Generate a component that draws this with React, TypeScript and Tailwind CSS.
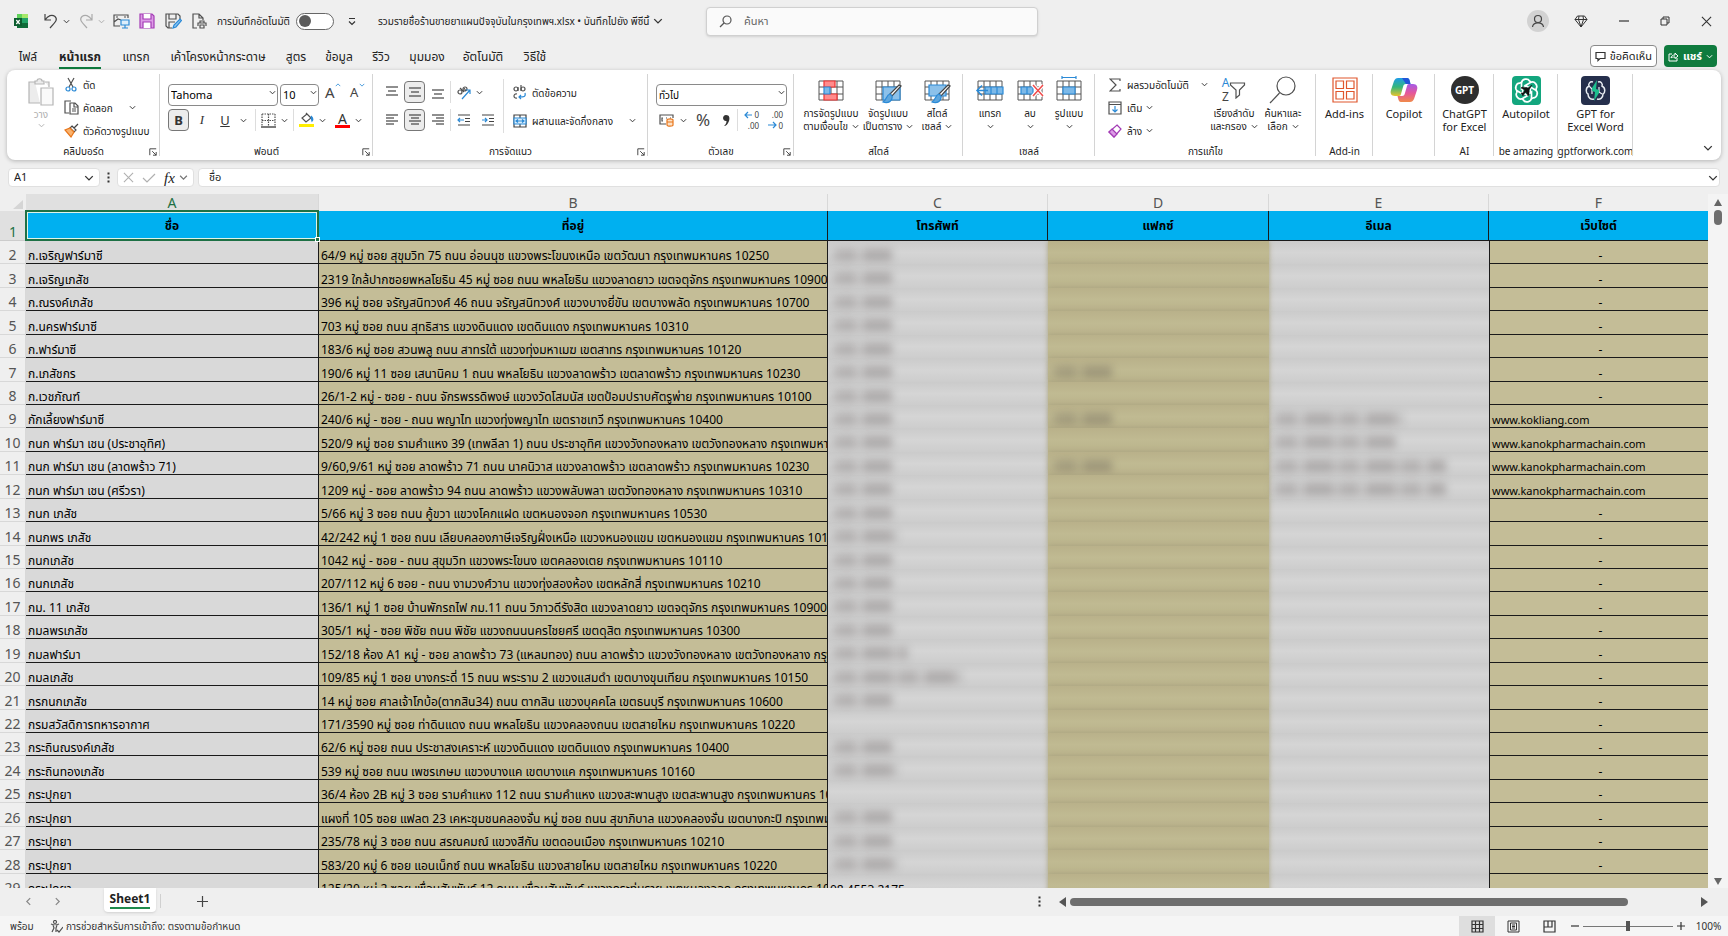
import { useState } from "react";
import type { ReactNode } from "react";
import { clsx } from "clsx";

type Smudge = { phone?: string; fax?: string; email?: string };

interface Shop extends Smudge {
  name: string;
  address: string;
  web?: string;
}

const SHORT = "w-[62px]";

const shops: Shop[] = [
  { name: "ก.เจริญฟาร์มาซี", address: "64/9 หมู่ ซอย สุขุมวิท 75 ถนน อ่อนนุช แขวงพระโขนงเหนือ เขตวัฒนา กรุงเทพมหานคร 10250", phone: SHORT },
  { name: "ก.เจริญเภสัช", address: "2319 ใกล้ปากซอยพหลโยธิน 45 หมู่ ซอย ถนน พหลโยธิน แขวงลาดยาว เขตจตุจักร กรุงเทพมหานคร 10900", phone: SHORT },
  { name: "ก.ณรงค์เภสัช", address: "396 หมู่ ซอย จรัญสนิทวงศ์ 46 ถนน จรัญสนิทวงศ์ แขวงบางยี่ขัน เขตบางพลัด กรุงเทพมหานคร 10700", phone: SHORT },
  { name: "ก.นครฟาร์มาซี", address: "703 หมู่ ซอย ถนน สุทธิสาร แขวงดินแดง เขตดินแดง กรุงเทพมหานคร 10310", phone: SHORT },
  { name: "ก.ฟาร์มาซี", address: "183/6 หมู่ ซอย สวนพลู ถนน สาทรใต้ แขวงทุ่งมหาเมฆ เขตสาทร กรุงเทพมหานคร 10120", phone: SHORT },
  { name: "ก.เภสัชกร", address: "190/6 หมู่ 11 ซอย เสนานิคม 1 ถนน พหลโยธิน แขวงลาดพร้าว เขตลาดพร้าว กรุงเทพมหานคร 10230", phone: SHORT, fax: SHORT },
  { name: "ก.เวชภัณฑ์", address: "26/1-2 หมู่ - ซอย - ถนน จักรพรรดิพงษ์ แขวงวัดโสมนัส เขตป้อมปราบศัตรูพ่าย กรุงเทพมหานคร 10100", phone: SHORT },
  { name: "กักเลี้ยงฟาร์มาซี", address: "240/6 หมู่ - ซอย - ถนน พญาไท แขวงทุ่งพญาไท เขตราชเทวี กรุงเทพมหานคร 10400", phone: SHORT, fax: SHORT, email: "w-[132px]", web: "www.kokliang.com" },
  { name: "กนก ฟาร์มา เชน (ประชาอุทิศ)", address: "520/9 หมู่ ซอย รามคำแหง 39 (เทพลีลา 1) ถนน ประชาอุทิศ แขวงวังทองหลาง เขตวังทองหลาง กรุงเทพมหานคร 10310", phone: SHORT, email: "w-[125px]", web: "www.kanokpharmachain.com" },
  { name: "กนก ฟาร์มา เชน (ลาดพร้าว 71)", address: "9/60,9/61 หมู่ ซอย ลาดพร้าว 71 ถนน นาคนิวาส แขวงลาดพร้าว เขตลาดพร้าว กรุงเทพมหานคร 10230", phone: SHORT, fax: SHORT, email: "w-[175px]", web: "www.kanokpharmachain.com" },
  { name: "กนก ฟาร์มา เชน (ศรีวรา)", address: "1209 หมู่ - ซอย ลาดพร้าว 94 ถนน ลาดพร้าว แขวงพลับพลา เขตวังทองหลาง กรุงเทพมหานคร 10310", phone: SHORT, email: "w-[175px]", web: "www.kanokpharmachain.com" },
  { name: "กนก เภสัช", address: "5/66 หมู่ 3 ซอย ถนน คู้ขวา แขวงโคกแฝด เขตหนองจอก กรุงเทพมหานคร 10530", phone: SHORT },
  { name: "กนกพร เภสัช", address: "42/242 หมู่ 1 ซอย ถนน เลียบคลองภาษีเจริญฝั่งเหนือ แขวงหนองแขม เขตหนองแขม กรุงเทพมหานคร 10160", phone: "w-[68px]" },
  { name: "กนกเภสัช", address: "1042 หมู่ - ซอย - ถนน สุขุมวิท แขวงพระโขนง เขตคลองเตย กรุงเทพมหานคร 10110", phone: SHORT },
  { name: "กนกเภสัช", address: "207/112 หมู่ 6 ซอย - ถนน งามวงศ์วาน แขวงทุ่งสองห้อง เขตหลักสี่ กรุงเทพมหานคร 10210", phone: SHORT },
  { name: "กม. 11 เภสัช", address: "136/1 หมู่ 1 ซอย บ้านพักรถไฟ กม.11 ถนน วิภาวดีรังสิต แขวงลาดยาว เขตจตุจักร กรุงเทพมหานคร 10900", phone: SHORT },
  { name: "กมลพรเภสัช", address: "305/1 หมู่ - ซอย พิชัย ถนน พิชัย แขวงถนนนครไชยศรี เขตดุสิต กรุงเทพมหานคร 10300", phone: SHORT },
  { name: "กมลฟาร์มา", address: "152/18 ห้อง A1 หมู่ - ซอย ลาดพร้าว 73 (แหลมทอง) ถนน ลาดพร้าว แขวงวังทองหลาง เขตวังทองหลาง กรุงเทพมหานคร 10310", phone: "w-[78px]" },
  { name: "กมลเภสัช", address: "109/85 หมู่ 1 ซอย บางกระดี่ 15 ถนน พระราม 2 แขวงแสมดำ เขตบางขุนเทียน กรุงเทพมหานคร 10150", phone: "w-[132px]" },
  { name: "กรกนกเภสัช", address: "14 หมู่ ซอย ศาลเจ้าโกบ้อ(ตากสิน34) ถนน ตากสิน แขวงบุคคโล เขตธนบุรี กรุงเทพมหานคร 10600", phone: SHORT },
  { name: "กรมสวัสดิการทหารอากาศ", address: "171/3590 หมู่ ซอย ท่าดินแดง ถนน พหลโยธิน แขวงคลองถนน เขตสายไหม กรุงเทพมหานคร 10220" },
  { name: "กระถินณรงค์เภสัช", address: "62/6 หมู่ ซอย ถนน ประชาสงเคราะห์ แขวงดินแดง เขตดินแดง กรุงเทพมหานคร 10400", phone: SHORT },
  { name: "กระถินทองเภสัช", address: "539 หมู่ ซอย ถนน เพชรเกษม แขวงบางแค เขตบางแค กรุงเทพมหานคร 10160", phone: "w-[68px]" },
  { name: "กระปุกยา", address: "36/4 ห้อง 2B หมู่ 3 ซอย รามคำแหง 112 ถนน รามคำแหง แขวงสะพานสูง เขตสะพานสูง กรุงเทพมหานคร 10240" },
  { name: "กระปุกยา", address: "แผงที่ 105 ซอย แฟลต 23 เคหะชุมชนคลองจั่น หมู่ ซอย ถนน สุขาภิบาล แขวงคลองจั่น เขตบางกะปิ กรุงเทพมหานคร 10240", phone: SHORT },
  { name: "กระปุกยา", address: "235/78 หมู่ 3 ซอย ถนน สรณคมณ์ แขวงสีกัน เขตดอนเมือง กรุงเทพมหานคร 10210", phone: SHORT },
  { name: "กระปุกยา", address: "583/20 หมู่ 6 ซอย แอนเน็กซ์ ถนน พหลโยธิน แขวงสายไหม เขตสายไหม กรุงเทพมหานคร 10220", phone: "w-[68px]" },
  { name: "กระปุกยา", address: "125/20 หมู่ 2 ซอย เพื่อนสัมพันธ์ 12 ถนน เพื่อนสัมพันธ์ แขวงกระทุ่มราย เขตหนองจอก กรุงเทพมหานคร 10530" },
];

const columns = [
  { letter: "A", title: "ชื่อ", width: "w-[293px]" },
  { letter: "B", title: "ที่อยู่", width: "w-[509px]" },
  { letter: "C", title: "โทรศัพท์", width: "w-[220px]" },
  { letter: "D", title: "แฟกซ์", width: "w-[221px]" },
  { letter: "E", title: "อีเมล", width: "w-[220px]" },
  { letter: "F", title: "เว็บไซต์", width: "w-[220px]" },
];

const tabs = [
  { label: "ไฟล์", width: "w-[40px]" },
  { label: "หน้าแรก", width: "w-[64px]" },
  { label: "แทรก", width: "w-[48px]" },
  { label: "เค้าโครงหน้ากระดาษ", width: "w-[116px]" },
  { label: "สูตร", width: "w-[40px]" },
  { label: "ข้อมูล", width: "w-[46px]" },
  { label: "รีวิว", width: "w-[38px]" },
  { label: "มุมมอง", width: "w-[54px]" },
  { label: "อัตโนมัติ", width: "w-[58px]" },
  { label: "วิธีใช้", width: "w-[46px]" },
];

const BLUE = "#2b8ad6";
const INK = "#505050";

function Svg({ w, h = w, box, children }: { w: number; h?: number; box?: string; children: ReactNode }) {
  return (
    <svg
      width={w}
      height={h}
      viewBox={box ?? `0 0 ${w} ${h}`}
      fill="none"
      stroke={INK}
      strokeWidth={1.2}
      className="block shrink-0"
      aria-hidden="true"
    >
      {children}
    </svg>
  );
}

function Chevron({ size = 7, color = "#333" }: { size?: number; color?: string }) {
  return (
    <svg width={size} height={size} viewBox="0 0 8 8" fill="none" stroke={color} strokeWidth={1.1} className="block shrink-0" aria-hidden="true">
      <path d="M1 2.5 4 5.5 7 2.5" />
    </svg>
  );
}

function Dots() {
  return (
    <Svg w={3} h={11}>
      <path d="M0.500 0.500H2.500V2.500H0.500ZM0.500 4.500H2.500V6.500H0.500ZM0.500 8.500H2.500V10.500H0.500Z" fill="#333" stroke="none" />
    </Svg>
  );
}

function Close({ size = 11, color = "#333" }: { size?: number; color?: string }) {
  return (
    <Svg w={size} box="0 0 12 12">
      <path d="M1 1 11 11M11 1 1 11" stroke={color} />
    </Svg>
  );
}

function Launcher() {
  return (
    <button aria-label="Dialog" className="absolute right-[3px] bottom-1">
      <Svg w={8} box="0 0 10 10">
        <path d="M1 9V1H9M4 4 9 9M9 5V9H5" stroke="#444" strokeWidth={1.2} />
      </Svg>
    </button>
  );
}

function Group({
  label,
  width,
  launcher,
  children,
}: {
  label: string;
  width: string;
  launcher?: boolean;
  children: ReactNode;
}) {
  return (
    <section className={clsx("relative flex h-[90px] shrink-0 flex-col", width)}>
      <div className="flex flex-1 px-2">{children}</div>
      <div className="flex h-[18px] items-center justify-center text-[10px] leading-4 whitespace-nowrap text-[#222]">{label}</div>
      {launcher && <Launcher />}
      <div className="absolute top-1 right-0 bottom-1 w-px bg-[#d4d4d4]" />
    </section>
  );
}

function BigButton({
  icon,
  lines,
  width,
  chevron,
}: {
  icon: ReactNode;
  lines: string[];
  width: string;
  chevron?: "inline" | "below";
}) {
  return (
    <button
      className={clsx(
        "flex shrink-0 flex-col items-center leading-[13px] whitespace-nowrap text-[#222]",
        chevron ? "text-[10px]" : "text-[11px]",
        width
      )}
    >
      <span className="mt-[6px] mb-[3px] flex h-[28px] items-center justify-center">{icon}</span>
      {lines.map((line, i) => (
        <span key={line} className="flex items-center gap-1">
          {line}
          {chevron === "inline" && i === lines.length - 1 && <Chevron />}
        </span>
      ))}
      {chevron === "below" && (
        <span className="flex h-[13px] items-center">
          <Chevron />
        </span>
      )}
    </button>
  );
}

function SmallButton({ icon, label, children }: { icon: ReactNode; label: string; children?: ReactNode }) {
  return (
    <button className="flex h-[23px] items-center gap-1 text-[10px] leading-4 whitespace-nowrap text-[#222]">
      <span className="flex w-4 justify-center">{icon}</span>
      {label}
      {children}
    </button>
  );
}

function Lines({ rows, pressed, label }: { rows: [number, number, number][]; pressed?: boolean; label: string }) {
  return (
    <button
      aria-label={label}
      className={clsx(
        "flex h-[22px] w-[21px] items-center justify-center rounded",
        pressed && "border border-[#777] bg-[#ececec]"
      )}
    >
      <Svg w={14} h={14}>
        {rows.map(([x1, x2, y]) => (
          <path key={y} d={`M${x1} ${y}H${x2}`} stroke="#444" />
        ))}
      </Svg>
    </button>
  );
}

/* 3x3 sheet used as the base of the style and cell icons */
function SheetIcon({ children }: { children: ReactNode }) {
  return (
    <Svg w={30} h={28}>
      <path d="M3 5H27V24H3ZM3 11H27M3 18H27M9 5V24M15 5V24M21 5V24" stroke="#555" strokeWidth={1} />
      {children}
    </Svg>
  );
}

function Brush() {
  return (
    <>
      <path d="M28 10 19 20 17 18 26 9Z" fill="#fff" stroke="#444" />
      <path d="M17 18C13 19 14 24 10 26C15 28 20 25 19 20Z" fill="#5ea6dd" stroke={BLUE} />
    </>
  );
}

function TitleBar() {
  const [autoSave, setAutoSave] = useState(false);

  return (
    <header className="flex h-[42px] shrink-0 items-center text-[11px] text-[#222]">
      <div className="flex w-[706px] shrink-0 items-center pl-[14px] text-[10px] leading-4 whitespace-nowrap">
        <Svg w={15} h={16}>
          <path d="M3 1H14V15H3Z" fill="#21a366" stroke="none" />
          <path d="M3 1H8V5H3Z" fill="#5fd35a" stroke="none" />
          <path d="M8 1H14V5H8Z" fill="#a6e86a" stroke="none" />
          <path d="M3 10H14V15H3Z" fill="#0f6b38" stroke="none" />
          <path d="M0 5H8V13H0Z" fill="#0c5c2e" stroke="none" />
          <path d="M2.3 7 5.7 11M5.7 7 2.3 11" stroke="#fff" strokeWidth={1.2} />
        </Svg>
        <button aria-label="Undo" className="ml-[14px] flex items-center gap-1">
          <Svg w={16} h={16}>
            <path d="M2 1V7H8M2 7C5 2.500 9 1 12 3.500C15 6.500 13 8.500 7 15" stroke="#444" />
          </Svg>
          <Chevron />
        </button>
        <button aria-label="Redo" disabled className="ml-2 flex items-center gap-1">
          <Svg w={16} h={16}>
            <path d="M14 1V7H8M14 7C11 2.500 7 1 4 3.500C1 6.500 3 8.500 9 15" stroke="#aaa" />
          </Svg>
          <Chevron color="#aaa" />
        </button>
        <button aria-label="Picture" className="ml-2">
          <Svg w={17} h={16}>
            <path d="M7 13H1V2H15V5M1 9 5 6 8 7M3 4H5M11 4H13" />
            <path d="M8 7H16V12H8ZM12 12V15M9 15H15" stroke={BLUE} fill="#dceefb" />
          </Svg>
        </button>
        <button aria-label="Save" className="ml-[9px]">
          <Svg w={16} h={16}>
            <path d="M1 1H13L15 3V15H1Z" fill="#dc9be6" stroke="#a33bb5" />
            <path d="M4 1V6H12V1M4 15V9H12V15" fill="#fff" stroke="#a33bb5" />
          </Svg>
        </button>
        <button aria-label="Save as" className="ml-[10px]">
          <Svg w={17} h={16}>
            <path d="M7 15H3L1 13V1H13L15 3V6M4 1V6H11V1M4 15V9H10" />
            <path d="M8 15 9 12 15 6 16.500 7.500 11 14Z" fill="#8cc4f0" stroke={BLUE} />
          </Svg>
        </button>
        <button aria-label="Print preview" className="ml-[10px]">
          <Svg w={15} h={16}>
            <path d="M5 15H1V1H7L11 5V7M7 1V5H11" />
            <path d="M6 13V10H14V13M8 10V8H12V10M8 12H12V15H8Z" />
          </Svg>
        </button>
        <label className="ml-[10px] flex items-center gap-[6px]">
          การบันทึกอัตโนมัติ
          <input type="checkbox" role="switch" className="peer sr-only" checked={autoSave} onChange={() => setAutoSave(!autoSave)} />
          <span className="flex h-[17px] w-[38px] items-center rounded-full border border-[#666] bg-white px-[2px]">
            <span className={clsx("size-[12px] rounded-full bg-[#5c5c5c]", autoSave && "ml-auto")} />
          </span>
        </label>
        <button aria-label="Customize" className="ml-[14px]">
          <Svg w={8} h={9}>
            <path d="M1 1.500H7M1 4.500 4 7.500 7 4.500" stroke="#333" />
          </Svg>
        </button>
        <button className="ml-[22px] flex items-center gap-1">
          รวมรายชื่อร้านขายยาแผนปัจจุบันในกรุงเทพฯ.xlsx • บันทึกไปยัง พีซีนี้
          <Chevron size={10} />
        </button>
      </div>
      <label className="flex h-[29px] w-[332px] items-center gap-3 rounded border border-[#d0d0d0] bg-[#fafafa] px-3 shadow-sm">
        <Svg w={13} h={13}>
          <circle cx={8} cy={5} r={4} stroke="#555" />
          <path d="M5 8 1 12" stroke="#555" />
        </Svg>
        <input aria-label="ค้นหา" placeholder="ค้นหา" className="w-full bg-transparent outline-none placeholder:text-[#666]" />
      </label>
      <div className="ml-auto flex items-center gap-[31px] pr-4">
        <button aria-label="Account" className="mr-[-6px] flex size-[22px] items-center justify-center rounded-full bg-[#d2d2d2]">
          <Svg w={14} h={14}>
            <circle cx={7} cy={5} r={3.500} stroke="#444" />
            <path d="M1.500 13C2 7.500 12 7.500 12.500 13" stroke="#444" />
          </Svg>
        </button>
        <button aria-label="Premium">
          <Svg w={14} h={13}>
            <path d="M3.500 1H10.500L13 4.500 7 12 1 4.500ZM1 4.500H13M5 1 4.500 4.500 7 12 9.500 4.500 9 1" stroke="#333" strokeWidth={1} />
          </Svg>
        </button>
        <button aria-label="Minimize">
          <Svg w={10} h={10}>
            <path d="M0 5H10" stroke="#333" />
          </Svg>
        </button>
        <button aria-label="Restore">
          <Svg w={10} h={10}>
            <path d="M1 3H7V9H1ZM3 3V1H9V7H7" stroke="#333" strokeWidth={1} />
          </Svg>
        </button>
        <button aria-label="Close">
          <Close size={11} />
        </button>
      </div>
    </header>
  );
}

function TabBar() {
  return (
    <nav className="flex h-[28px] shrink-0 items-center pr-[11px] text-[12px] text-[#222]">
      <div className="flex flex-1 pt-[3px] pl-2">
        {tabs.map((tab, i) => (
          <button key={tab.label} className={clsx("flex justify-center leading-5 whitespace-nowrap", tab.width)}>
            <span className={clsx(i === 1 && "border-b-2 border-[#0f7b3e] font-bold")}>{tab.label}</span>
          </button>
        ))}
      </div>
      <button className="flex h-[22px] items-center gap-1 rounded border border-[#8a8a8a] bg-white px-1 text-[11px]">
        <Svg w={11} h={11}>
          <path d="M1 1.500H10V7.500H5L3 9.500V7.500H1Z" stroke="#333" />
        </Svg>
        ข้อคิดเห็น
      </button>
      <button className="ml-[7px] flex h-[22px] items-center gap-1 rounded bg-[#0f7b3e] px-1 text-[11px] font-bold text-white">
        <Svg w={11} h={11}>
          <path d="M4 3H1V10H9V7M3 7C3.500 4.500 5 4 7 4V2L10 5 7 7.500V6C5 6 4 6 3 7Z" stroke="#fff" strokeWidth={1} />
        </Svg>
        แชร์
        <Chevron color="#fff" />
      </button>
    </nav>
  );
}

function FontGroup() {
  return (
    <Group label="ฟอนต์" width="w-[213px]" launcher>
      <div className="flex flex-col gap-[6px] pt-[11px]">
        <div className="flex items-center">
          <div className="relative h-[22px] w-[110px]">
            <select aria-label="Font" className="h-full w-full appearance-none rounded border border-[#8a8a8a] bg-white pl-[2px] text-[11px] leading-4">
              <option>Tahoma</option>
            </select>
            <span className="pointer-events-none absolute top-2 right-[2px]"><Chevron /></span>
          </div>
          <div className="relative ml-[2px] h-[22px] w-[39px]">
            <select aria-label="Font size" className="h-full w-full appearance-none rounded border border-[#8a8a8a] bg-white pl-[2px] text-[11px] leading-4">
              <option>10</option>
            </select>
            <span className="pointer-events-none absolute top-2 right-[2px]"><Chevron /></span>
          </div>
          <button aria-label="Grow font" className="relative ml-[6px] w-[22px] text-left text-[15px] leading-5 text-[#444]">
            A
            <span className="absolute top-0 left-[10px] rotate-180"><Chevron size={6} color={BLUE} /></span>
          </button>
          <button aria-label="Shrink font" className="relative ml-[3px] w-[20px] text-left text-[13px] leading-5 text-[#444]">
            A
            <span className="absolute top-0 left-[9px]"><Chevron size={6} color={BLUE} /></span>
          </button>
        </div>
        <div className="flex items-center text-[13px] leading-5 text-[#333]">
          <button className="flex h-[22px] w-[21px] items-center justify-center rounded border border-[#777] bg-[#ececec] font-bold">B</button>
          <button className="ml-[7px] w-[12px] font-['Liberation_Serif',serif] italic">I</button>
          <button className="ml-[10px] w-[14px] underline">U</button>
          <span className="ml-2"><Chevron /></span>
          <span className="ml-2 h-[22px] w-px bg-[#ddd]" />
          <button aria-label="Borders" className="mx-[5px]">
            <Svg w={15} h={15}>
              <path d="M1 1H14M1 7.500H14M1 1V13M14 1V13M7.500 1V13" strokeDasharray="1.500 1" />
              <path d="M0 14H15" stroke="#222" />
            </Svg>
          </button>
          <Chevron />
          <span className="ml-[5px] h-[22px] w-px bg-[#ddd]" />
          <button aria-label="Fill color" className="mr-[5px] ml-[5px]">
            <Svg w={15} h={16}>
              <path d="M7 1 12 6 7 10 3 6 8 2" />
              <path d="M12 4C14 6 14 8 13 9L12 5" stroke={BLUE} fill={BLUE} />
              <path d="M0 12H15V15H0Z" fill="#ffee00" stroke="none" />
            </Svg>
          </button>
          <Chevron />
          <button aria-label="Font color" className="mr-[5px] ml-[9px] flex flex-col items-center">
            <span className="h-[13px] text-[14px] leading-[13px]">A</span>
            <span className="h-[3px] w-[15px] bg-[#f00]" />
          </button>
          <Chevron />
        </div>
      </div>
    </Group>
  );
}

function AlignGroup() {
  return (
    <Group label="การจัดแนว" width="w-[275px]" launcher>
      <div className="flex flex-col gap-[6px] pt-[11px]">
        <div className="flex items-center gap-[2px]">
          <Lines label="Top" rows={[[1, 13, 2], [3, 11, 6], [1, 13, 10]]} />
          <Lines label="Middle" pressed rows={[[1, 13, 3], [3, 11, 7], [1, 13, 11]]} />
          <Lines label="Bottom" rows={[[1, 13, 5], [3, 11, 9], [1, 13, 13]]} />
          <span className="h-[22px] w-px bg-[#ddd]" />
          <button aria-label="Orientation" className="mx-1 flex items-center gap-1">
            <Svg w={15} h={15}>
              <circle cx={3} cy={7} r={2} />
              <path d="M3 3 7 7M7 3 9 6" />
              <circle cx={8} cy={4} r={2} />
              <path d="M5 14 13 5M9 5H13V9" stroke={BLUE} />
            </Svg>
            <Chevron />
          </button>
        </div>
        <div className="flex items-center gap-[2px]">
          <Lines label="Left" rows={[[1, 13, 2], [1, 9, 5], [1, 13, 8], [1, 9, 11]]} />
          <Lines label="Center" pressed rows={[[1, 13, 2], [3, 11, 5], [1, 13, 8], [3, 11, 11]]} />
          <Lines label="Right" rows={[[1, 13, 2], [5, 13, 5], [1, 13, 8], [5, 13, 11]]} />
          <span className="h-[22px] w-px bg-[#ddd]" />
          <button aria-label="Decrease indent" className="mx-1">
            <Svg w={14} h={12}>
              <path d="M1 1H13M8 4.500H13M8 7.500H13M1 11H13" stroke="#444" />
              <path d="M7 6H1M3 4 1 6 3 8" stroke={BLUE} />
            </Svg>
          </button>
          <button aria-label="Increase indent" className="mx-1">
            <Svg w={14} h={12}>
              <path d="M1 1H13M8 4.500H13M8 7.500H13M1 11H13" stroke="#444" />
              <path d="M1 6H6M4 4 6 6 4 8" stroke={BLUE} />
            </Svg>
          </button>
        </div>
      </div>
      <div className="ml-1 flex w-px flex-col py-[9px]"><span className="w-px flex-1 bg-[#ddd]" /></div>
      <div className="flex flex-col gap-[5px] pt-[11px] pl-2">
        <SmallButton
          label="ตัดข้อความ"
          icon={
            <Svg w={14} h={15}>
              <circle cx={3} cy={4} r={2} />
              <path d="M5 2V6M8 0V6M4 9C0 8 0 14 4 13" />
              <circle cx={10} cy={4} r={2} />
              <path d="M12 8C13 12 11 12 6 12M8 10 6 12 8 14" stroke={BLUE} />
            </Svg>
          }
        />
        <SmallButton
          label="ผสานและจัดกึ่งกลาง"
          icon={
            <Svg w={14} h={14}>
              <path d="M1 1H13V13H1ZM7 1V4M7 10V13" stroke="#444" />
              <path d="M1 4H13V10H1Z" fill="#dceefb" stroke={BLUE} />
              <path d="M3 7H11M5 5.500 3 7 5 8.500M9 5.500 11 7 9 8.500" stroke={BLUE} />
            </Svg>
          }
        >
          <span className="ml-3"><Chevron /></span>
        </SmallButton>
      </div>
    </Group>
  );
}

function NumberGroup() {
  return (
    <Group label="ตัวเลข" width="w-[146px]" launcher>
      <div className="flex w-full flex-col gap-[6px] pt-[11px]">
        <div className="relative h-[22px] w-[131px]">
          <select aria-label="Number format" className="h-full w-full appearance-none rounded border border-[#8a8a8a] bg-white pl-[2px] text-[10px] leading-4">
            <option>ทั่วไป</option>
          </select>
          <span className="pointer-events-none absolute top-2 right-[2px]"><Chevron /></span>
        </div>
        <div className="flex h-[22px] items-center text-[#444]">
          <button aria-label="Currency" className="ml-[3px]">
            <Svg w={16} h={14}>
              <path d="M7 11H1V2H14V5M4 5H3V8H4M7 5H8M11 5H12" />
              <path d="M8 7C8 5.500 14 5.500 14 7V12C14 13.500 8 13.500 8 12ZM8 9H14" fill="#fde1c5" stroke="#e8761b" />
            </Svg>
          </button>
          <span className="ml-[5px]"><Chevron /></span>
          <button className="ml-[9px] text-[17px] leading-5">%</button>
          <button aria-label="Comma style" className="ml-3">
            <Svg w={9} h={13}>
              <path d="M4 1C7.500 1 8 4 7 7C6 10 4 12 2 12C4 10 4.500 9 4.500 7C0 7.500 0 1 4 1Z" fill="#333" stroke="none" />
            </Svg>
          </button>
          <span className="mx-[6px] h-[22px] w-px bg-[#ddd]" />
          <button aria-label="Increase decimal" className="relative flex w-[15px] flex-col items-end text-[8px] leading-[11px]">
            <span>0</span>
            <span>.00</span>
            <span className="absolute top-[2px] left-0">
              <Svg w={8} h={8}><path d="M8 4H1M4 1 1 4 4 7" stroke={BLUE} /></Svg>
            </span>
          </button>
          <button aria-label="Decrease decimal" className="relative ml-[9px] flex w-[15px] flex-col items-end text-[8px] leading-[11px]">
            <span>.00</span>
            <span>0</span>
            <span className="absolute bottom-[2px] left-0">
              <Svg w={9} h={8}><path d="M0 4H8M5 1 8 4 5 7" stroke={BLUE} /></Svg>
            </span>
          </button>
        </div>
      </div>
    </Group>
  );
}

function Ribbon() {
  return (
    <div className="mx-[7px] flex h-[90px] shrink-0 rounded-lg bg-white shadow-[0_1px_4px_rgba(0,0,0,0.25)]">
      <Group label="คลิปบอร์ด" width="w-[153px]" launcher>
        <button disabled className="flex w-[44px] flex-col items-center pl-2 text-[10px] leading-4 text-[#b0b0b0]">
          <span className="mt-2">
            <Svg w={26} h={28}>
              <path d="M7 4H1V25H12M17 4H21V9M7 6V3H9C9 0 14 0 14 3H16V6Z" stroke="#b5b5b5" fill="#ececec" />
              <path d="M13 10H25V27H13Z" stroke="#b5b5b5" fill="#fafafa" />
            </Svg>
          </span>
          วาง
          <Chevron color="#b0b0b0" />
        </button>
        <div className="flex flex-col pt-[3px] pl-1">
          <SmallButton
            label="ตัด"
            icon={
              <Svg w={12} h={15}>
                <path d="M3 1 8 10M9 1 4 10" />
                <circle cx={3} cy={12} r={2} stroke={BLUE} />
                <circle cx={9} cy={12} r={2} stroke={BLUE} />
              </Svg>
            }
          />
          <SmallButton
            label="คัดลอก"
            icon={
              <Svg w={15} h={15}>
                <path d="M5 13H1V1H7M6 3H11L14 6V14H6ZM10 3V7H14M8 9H12M8 11H12" />
              </Svg>
            }
          >
            <span className="ml-3"><Chevron /></span>
          </SmallButton>
          <SmallButton
            label="ตัวคัดวางรูปแบบ"
            icon={
              <Svg w={15} h={15}>
                <path d="M14 1 10 5M8 3 12 7 10 9 6 5Z" stroke="#444" />
                <path d="M6 5 10 9 7 14 1 7Z" fill="#f9b26e" stroke="#e8761b" />
              </Svg>
            }
          />
        </div>
      </Group>

      <FontGroup />
      <AlignGroup />
      <NumberGroup />

      <Group label="สไตล์" width="w-[169px]">
        <BigButton
          width="w-[58px]"
          chevron="inline"
          lines={["การจัดรูปแบบ", "ตามเงื่อนไข"]}
          icon={
            <SheetIcon>
              <path d="M8 5H19V11H8ZM8 18H21V24H8Z" fill="#ff8c8c" stroke="#e33" />
              <path d="M8 11H14V18H8Z" fill="#7db9e8" stroke={BLUE} />
            </SheetIcon>
          }
        />
        <BigButton
          width="w-[56px]"
          chevron="inline"
          lines={["จัดรูปแบบ", "เป็นตาราง"]}
          icon={
            <SheetIcon>
              <path d="M10 11H27V24H10Z" fill="#8cc1ea" stroke={BLUE} />
              <Brush />
            </SheetIcon>
          }
        />
        <BigButton
          width="w-[42px]"
          chevron="inline"
          lines={["สไตล์", "เซลล์"]}
          icon={
            <SheetIcon>
              <path d="M7 9H24V20H7Z" fill="#8cc1ea" stroke={BLUE} />
              <Brush />
            </SheetIcon>
          }
        />
      </Group>

      <Group label="เซลล์" width="w-[132px]">
        <BigButton
          width="w-[38px]"
          chevron="below"
          lines={["แทรก"]}
          icon={
            <SheetIcon>
              <path d="M10 11H28V18H10ZM16 11V18M22 11V18" fill="#7db9e8" stroke={BLUE} />
              <path d="M13 14.500H2M7 9.500 2 14.500 7 19.500" stroke={BLUE} strokeWidth={1.500} />
            </SheetIcon>
          }
        />
        <BigButton
          width="w-[42px]"
          chevron="below"
          lines={["ลบ"]}
          icon={
            <SheetIcon>
              <path d="M6 11H18V18H6ZM12 11V18" fill="#7db9e8" stroke={BLUE} />
              <path d="M18 9 28 20M28 9 18 20" stroke="#fff" strokeWidth={4} />
              <path d="M18 9 28 20M28 9 18 20" stroke="#f04a4a" strokeWidth={1.500} />
            </SheetIcon>
          }
        />
        <BigButton
          width="w-[36px]"
          chevron="below"
          lines={["รูปแบบ"]}
          icon={
            <SheetIcon>
              <path d="M9 11H21V18H9Z" fill="#7db9e8" stroke={BLUE} />
              <path d="M8 1.500H22M8 0V3M22 0V3" stroke={BLUE} />
            </SheetIcon>
          }
        />
      </Group>

      <Group label="การแก้ไข" width="w-[221px]">
        <div className="flex w-[112px] flex-col pt-[3px] pl-1">
          <SmallButton
            label="ผลรวมอัตโนมัติ"
            icon={
              <Svg w={12} h={14}>
                <path d="M11 3V1H1L7 7 1 13H11V11" />
              </Svg>
            }
          >
            <span className="ml-2"><Chevron /></span>
          </SmallButton>
          <SmallButton
            label="เติม"
            icon={
              <Svg w={14} h={14}>
                <path d="M1 1H13V13H1ZM1 3.500H13" />
                <path d="M7 5V11M4.500 8.500 7 11 9.500 8.500" stroke={BLUE} />
              </Svg>
            }
          >
            <Chevron />
          </SmallButton>
          <SmallButton
            label="ล้าง"
            icon={
              <Svg w={14} h={14}>
                <path d="M9 1 13 5 6 13 1 8Z" stroke="#a33bb5" fill="#fff" />
                <path d="M4 5 9 10 6 13 1 8Z" stroke="#a33bb5" fill="#dc9be6" />
              </Svg>
            }
          >
            <Chevron />
          </SmallButton>
        </div>
        <BigButton
          width="w-[48px]"
          chevron="inline"
          lines={["เรียงลำดับ", "และกรอง"]}
          icon={
            <span className="flex items-center">
              <span className="flex flex-col text-[12px] leading-[14px]">
                <span className="text-[#2b8ad6]">A</span>
                <span className="text-[#444]">Z</span>
              </span>
              <Svg w={17} h={18}>
                <path d="M1.500 2H15.500V4L10.500 9V14L7 17V9L1.500 4Z" />
              </Svg>
            </span>
          }
        />
        <BigButton
          width="w-[50px]"
          chevron="inline"
          lines={["ค้นหาและ", "เลือก"]}
          icon={
            <Svg w={28} h={28}>
              <circle cx={17} cy={10} r={9} />
              <path d="M10.500 17 1 27" />
            </Svg>
          }
        />
      </Group>

      <Group label="Add-in" width="w-[57px]">
        <BigButton
          width="w-full"
          lines={["Add-ins"]}
          icon={
            <Svg w={26} h={26}>
              <path d="M1 1H25V25H1Z" stroke="#e0562d" />
              <path d="M4 4H11.500V11.500H4ZM14.500 4H22V11.500H14.500ZM4 14.500H11.500V22H4ZM14.500 14.500H22V22H14.500Z" stroke="#e0562d" />
            </Svg>
          }
        />
      </Group>

      <Group label="" width="w-[62px]">
        <BigButton
          width="w-full"
          lines={["Copilot"]}
          icon={
            <Svg w={28} h={26} box="0 0 28 26">
              <defs>
                <linearGradient id="copilotLeft" x1="0" y1="0" x2="0" y2="1">
                  <stop offset="0" stopColor="#1e9be8" />
                  <stop offset="0.5" stopColor="#35b77a" />
                  <stop offset="1" stopColor="#e8c22c" />
                </linearGradient>
                <linearGradient id="copilotRight" x1="0" y1="0" x2="0" y2="1">
                  <stop offset="0" stopColor="#a45be8" />
                  <stop offset="0.5" stopColor="#e5569b" />
                  <stop offset="1" stopColor="#f08a4a" />
                </linearGradient>
              </defs>
              <path d="M8 1H17C19 1 19.500 3 20 5L20.500 7H16C14 7 13.500 8 13 10L11 17C10.500 19 9.500 19 8 19H5C1 19 0 16 1 13L4 4C5 2 6 1 8 1Z" fill="url(#copilotLeft)" stroke="none" />
              <path d="M12 1H17C19 1 19.500 3 20 5L20.500 7H16Z" fill="#2156d8" stroke="none" />
              <path d="M20 25H11C9 25 8.500 23 8 21L7.500 19H12C14 19 14.500 18 15 16L17 9C17.500 7 18.500 7 20 7H23C27 7 28 10 27 13L24 22C23 24 22 25 20 25Z" fill="url(#copilotRight)" stroke="none" />
            </Svg>
          }
        />
      </Group>

      <Group label="AI" width="w-[59px]">
        <BigButton
          width="w-full"
          lines={["ChatGPT", "for Excel"]}
          icon={
            <span className="flex size-[28px] items-center justify-center rounded-full bg-[#2e2e2e] text-[10px] font-bold text-white">
              GPT
            </span>
          }
        />
      </Group>

      <Group label="be amazing" width="w-[64px]">
        <BigButton
          width="w-full"
          lines={["Autopilot"]}
          icon={
            <Svg w={29} h={29}>
              <rect width={29} height={29} rx={4} fill="#13a67e" stroke="none" />
              {[0, 60, 120, 180, 240, 300].map((a) => (
                <path key={a} d="M14.500 10 9.500 13V7C10 2.500 16 2 17.500 5L19 6" stroke="#fff" strokeWidth={1.700} transform={`rotate(${a} 14.500 14.500)`} />
              ))}
              <path d="M20 9 16 12 10 11 9 12 13 14 11 17 9 17 11 20 12 18 14 16 16 20 17 19 17 14Z" fill="#111" stroke="#111" strokeWidth={0.500} />
            </Svg>
          }
        />
      </Group>

      <Group label="gptforwork.com" width="w-[75px]">
        <BigButton
          width="w-full"
          lines={["GPT for", "Excel Word"]}
          icon={
            <Svg w={29} h={29}>
              <rect width={29} height={29} rx={4} fill="#252f4c" stroke="none" />
              <path d="M12 6C9 5 7 8 8 10C4 12 5 17 7 18C7 22 10 24 13 23" stroke="#e8edf2" strokeWidth={1.500} />
              <path d="M17 6C20 5 22 8 21 10C25 12 24 17 22 18C22 22 19 24 16 23" stroke="#e8edf2" strokeWidth={1.500} />
              <path d="M8 10 11 13V18M21 18 18 16V11" stroke="#e8edf2" />
              <path d="M16 4 11 12V15L14 16 13 25 18 17V14L15 13Z" fill="#1fbf8f" stroke="none" />
            </Svg>
          }
        />
      </Group>

      <button aria-label="Collapse ribbon" className="mt-auto mr-2 mb-[7px] ml-auto">
        <Chevron size={10} />
      </button>
    </div>
  );
}

function FormulaBar() {
  const [formula, setFormula] = useState("ชื่อ");

  return (
    <div className="mt-2 flex h-[19px] shrink-0 items-center px-2 text-[11px] text-[#222]">
      <label className="flex h-full w-[92px] items-center rounded border border-[#e0e0e0] bg-white px-[5px]">
        <input aria-label="Name box" defaultValue="A1" className="w-full bg-transparent outline-none" />
        <Chevron size={10} />
      </label>
      <span className="mx-[7px]"><Dots /></span>
      <div className="flex h-full w-[77px] shrink-0 items-center gap-2 rounded border border-[#e0e0e0] bg-white pr-[2px] pl-[5px]">
        <button aria-label="Cancel"><Close size={11} color="#b0b0b0" /></button>
        <button aria-label="Enter">
          <Svg w={14} h={10}><path d="M1 5 5 9 13 1" stroke="#b0b0b0" /></Svg>
        </button>
        <button className="flex items-center gap-1 font-['Liberation_Serif',serif] text-[15px] leading-4 italic">
          fx
          <Chevron size={9} color="#777" />
        </button>
      </div>
      <label className="ml-1 flex h-full flex-1 items-center rounded border border-[#e0e0e0] bg-white pr-px pl-[10px]">
        <input aria-label="Formula" value={formula} onChange={(e) => setFormula(e.target.value)} className="w-full bg-transparent outline-none" />
        <Chevron size={10} />
      </label>
    </div>
  );
}

function Redacted({ width }: { width?: string }) {
  if (!width) return null;
  return (
    <span
      className={clsx(
        "block h-3 bg-[repeating-linear-gradient(90deg,rgba(70,60,60,0.2)_0_7px,rgba(70,60,60,0.4)_7px_26px,rgba(70,60,60,0.12)_26px_33px,rgba(70,60,60,0.45)_33px_62px)] opacity-60 blur-[4px]",
        width
      )}
    />
  );
}

function Sheet() {
  const greyBand = "bg-linear-to-b from-[#cbcbcb] via-[#d5d5d5] to-[#cdcdcd]";

  return (
    <div className="mt-[7px] flex min-h-0 flex-1">
      <div className="min-w-0 flex-1 overflow-hidden">
        <table className="w-full table-fixed border-separate border-spacing-0 text-[12px] text-black">
          <colgroup>
            <col className="w-[26px]" />
            {columns.map((col) => (
              <col key={col.letter} className={col.width} />
            ))}
          </colgroup>
          <thead>
            <tr className="h-[17px] text-[14px] leading-[16px] text-[#555]">
              <td className="p-0">
                <svg width="25" height="16" viewBox="0 0 25 16" className="block" aria-hidden="true">
                  <path d="M23 5V14H13Z" fill="#d5d5d5" />
                </svg>
              </td>
              {columns.map((col, i) => (
                <th
                  key={col.letter}
                  scope="col"
                  className={clsx("border-r border-[#d8d8d8] p-0 font-normal", i === 0 && "bg-[#e0e0e0] text-[#1e7145]")}
                >
                  {col.letter}
                </th>
              ))}
            </tr>
            <tr className="h-[30px]">
              <th scope="row" className="border-b border-[#ccc] bg-[#e0e0e0] p-0 align-bottom text-[14px] leading-4 font-normal text-[#1e7145]">
                1
              </th>
              {columns.map((col, i) => (
                <th
                  key={col.letter}
                  scope="col"
                  className={clsx(
                    "relative border-r border-b border-[#1a1a1a] bg-[#00b0f0] p-0 text-[12px] leading-4 font-bold",
                    i === 0 ? "z-20" : "z-10"
                  )}
                >
                  {col.title}
                  {i === 0 && (
                    <span className="pointer-events-none absolute inset-0 -m-px border-2 border-[#1e7145] shadow-[inset_0_0_0_1px_#dff3e8]">
                      <span className="absolute -right-[3px] -bottom-[3px] size-[5px] border border-white bg-[#1e7145]" />
                    </span>
                  )}
                </th>
              ))}
            </tr>
          </thead>
          <tbody>
            {shops.map((shop, i) => {
              const last = i === shops.length - 1;
              return (
                <tr key={i} className={clsx("leading-[14px] whitespace-nowrap", (i % 7) % 2 ? "h-[24px]" : "h-[23px]")}>
                  <th scope="row" className="border-r border-b border-[#d8d8d8] p-0 align-bottom text-[14px] leading-4 font-normal text-[#555]">
                    {i + 2}
                  </th>
                  <td className="overflow-hidden border-r border-b border-[#1a1a1a] bg-[#d9d9d9] p-0 pl-[2px] align-bottom">
                    {shop.name}
                  </td>
                  <td className="overflow-hidden border-r border-b border-[#1a1a1a] bg-[#c4bd97] p-0 pl-[2px] align-bottom">
                    {shop.address}
                  </td>
                  <td className={clsx("p-0 pl-[2px]", last ? "align-bottom" : "pt-1 align-middle", greyBand)}>
                    {last ? "08 4553 2175" : <Redacted width={shop.phone} />}
                  </td>
                  <td className="relative bg-linear-to-b from-[#b9b18a] via-[#c0ba92] to-[#bab38c] p-0 pt-1 pl-[2px] align-middle shadow-[0_0_5px_#a9a27f]">
                    <Redacted width={shop.fax} />
                  </td>
                  <td className={clsx("p-0 pt-1 pl-[2px] align-middle", greyBand)}>
                    <Redacted width={shop.email} />
                  </td>
                  <td
                    className={clsx(
                      "overflow-hidden border-b border-l border-[#1a1a1a] bg-[#c4bd97] p-0 pl-[2px] align-bottom",
                      shop.web ? "text-[11px]" : "text-center"
                    )}
                  >
                    {shop.web ?? "-"}
                  </td>
                </tr>
              );
            })}
          </tbody>
        </table>
      </div>
      <div className="flex w-5 shrink-0 flex-col items-center bg-[#f4f4f4] pt-1 pb-[2px]">
        <Svg w={10} h={9}><path d="M5 1 9 8H1Z" fill="#666" stroke="none" /></Svg>
        <span className="mt-[3px] h-[15px] w-2 rounded-full bg-[#6e6e6e]" />
        <span className="mt-auto"><Svg w={10} h={9}><path d="M5 8 9 1H1Z" fill="#666" stroke="none" /></Svg></span>
      </div>
    </div>
  );
}

function SheetTabs() {
  return (
    <div className="flex h-7 shrink-0 items-start bg-[#efefef]">
      <div className="flex h-[27px] w-[104px] items-center gap-[20px] pl-[24px]">
        <span className="rotate-90"><Chevron size={9} color="#888" /></span>
        <span className="-rotate-90"><Chevron size={9} color="#888" /></span>
      </div>
      <button className="flex h-[24px] w-[52px] items-center justify-center rounded-b bg-white text-[12px] leading-4 font-bold text-[#222] shadow-sm">
        <span className="border-b-2 border-[#1e8a4c]">Sheet1</span>
      </button>
      <span className="mt-[6px] ml-1 h-[14px] w-px bg-[#d0d0d0]" />
      <button aria-label="New sheet" className="mt-2 ml-[36px]">
        <Svg w={11} h={11}><path d="M5.500 0V11M0 5.500H11" stroke="#444" /></Svg>
      </button>
      <div className="ml-auto flex h-[27px] w-[690px] items-center pr-5">
        <Dots />
        <span className="ml-[18px]"><Svg w={8} h={10}><path d="M7 0V10L0 5Z" fill="#555" stroke="none" /></Svg></span>
        <div className="mx-[3px] flex-1">
          <div className="h-2 w-[89%] rounded-full bg-[#6e6e6e]" />
        </div>
        <Svg w={8} h={10}><path d="M1 0V10L8 5Z" fill="#555" stroke="none" /></Svg>
      </div>
    </div>
  );
}

function StatusBar() {
  const [zoom, setZoom] = useState(100);

  return (
    <footer className="flex h-5 shrink-0 items-center bg-[#f5f5f5] pl-[10px] text-[10px] leading-4 text-[#333]">
      <span className="w-[40px]">พร้อม</span>
      <Svg w={13} h={13}>
        <circle cx={5} cy={2} r={1.500} />
        <path d="M1 4C3 5 7 5 9 4M3 5 4 8 2 12M7 5 6 8V12M7 10 9 12 13 7" />
      </Svg>
      <span className="ml-[3px]">การช่วยสำหรับการเข้าถึง: ตรงตามข้อกำหนด</span>
      <div className="ml-auto flex h-full items-center">
        <button aria-label="Normal view" className="flex h-full w-[36px] items-center justify-center bg-[#dedede]">
          <Svg w={13} h={13}><path d="M1 1H12V12H1ZM1 4.500H12M1 8.500H12M4.500 1V12M8.500 1V12" stroke="#333" /></Svg>
        </button>
        <button aria-label="Page layout" className="flex w-[36px] justify-center">
          <Svg w={13} h={13}><path d="M1 1H12V12H1ZM3.500 3H9.500V10H3.500ZM5 5H8M5 6.500H8M5 8H8" stroke="#333" strokeWidth={1} /></Svg>
        </button>
        <button aria-label="Page break" className="flex w-[36px] justify-center">
          <Svg w={13} h={13}><path d="M1 1H12V12H1ZM5 1V7M1 7H9V1" stroke="#333" /></Svg>
        </button>
        <button aria-label="Zoom out" className="ml-1">
          <Svg w={8} h={8}><path d="M0 4H8" stroke="#333" /></Svg>
        </button>
        <input
          type="range"
          aria-label="Zoom"
          min={10}
          max={190}
          value={zoom}
          onChange={(e) => setZoom(Number(e.target.value))}
          className="mx-1 h-4 w-[90px] appearance-none bg-[linear-gradient(#777,#777)] bg-[length:100%_1px] bg-center bg-no-repeat [&::-webkit-slider-thumb]:h-[10px] [&::-webkit-slider-thumb]:w-1 [&::-webkit-slider-thumb]:appearance-none [&::-webkit-slider-thumb]:bg-[#555]"
        />
        <button aria-label="Zoom in">
          <Svg w={8} h={8}><path d="M0 4H8M4 0V8" stroke="#333" /></Svg>
        </button>
        <span className="w-[43px] pl-1 text-center">{zoom}%</span>
      </div>
    </footer>
  );
}

export default function App() {
  return (
    <main className="flex h-screen flex-col overflow-hidden bg-[#efefef] font-['Noto_Sans','Noto_Sans_Thai',sans-serif]">
      <TitleBar />
      <TabBar />
      <Ribbon />
      <FormulaBar />
      <Sheet />
      <SheetTabs />
      <StatusBar />
    </main>
  );
}
